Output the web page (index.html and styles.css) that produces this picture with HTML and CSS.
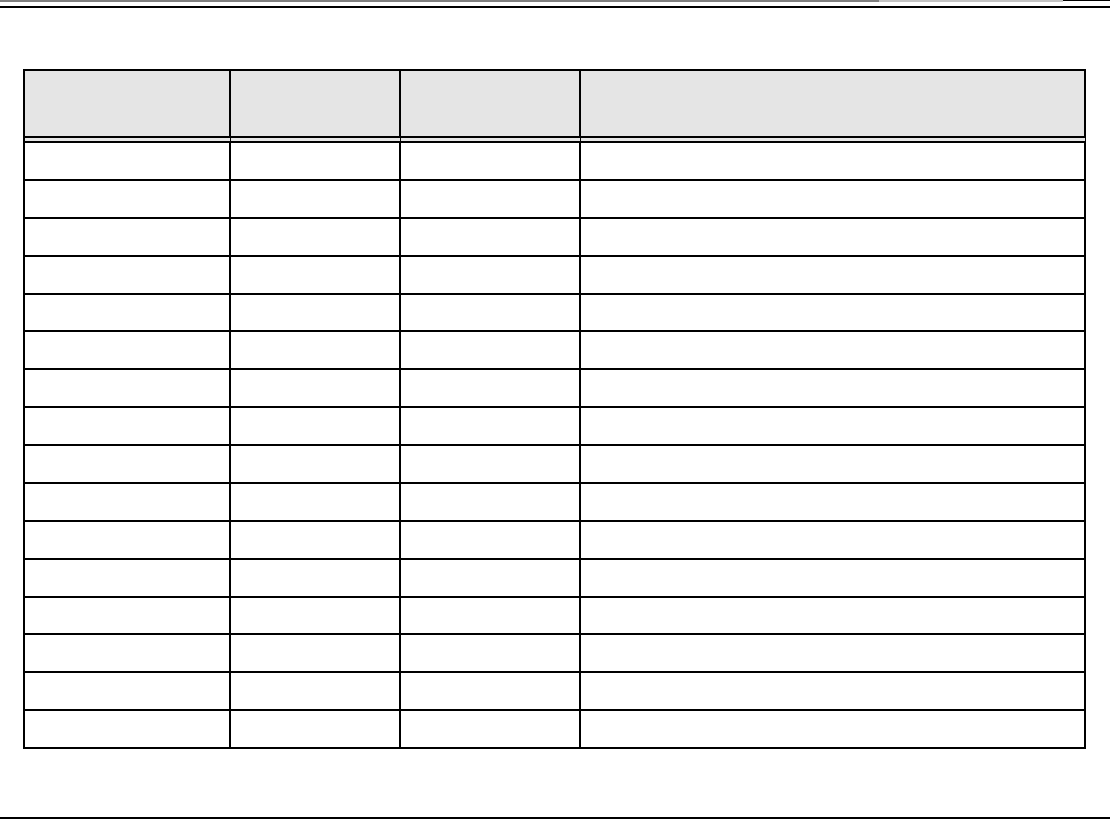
FILE: index.html
```html
<!DOCTYPE html>
<html lang="en">
<head>
<meta charset="utf-8">
<title>Table</title>
<link rel="stylesheet" href="styles.css">
</head>
<body>
<div class="page">
  <header class="top">
    <div class="strip">
      <span class="seg seg-dark"></span>
      <span class="seg seg-light"></span>
      <span class="seg seg-black"></span>
    </div>
    <div class="rule"></div>
  </header>
  <main class="content">
    <div class="table">
      <div class="cell head"></div>
      <div class="cell head"></div>
      <div class="cell head"></div>
      <div class="cell head"></div>

      <div class="cell"></div><div class="cell"></div><div class="cell"></div><div class="cell"></div>
      <div class="cell"></div><div class="cell"></div><div class="cell"></div><div class="cell"></div>
      <div class="cell"></div><div class="cell"></div><div class="cell"></div><div class="cell"></div>
      <div class="cell"></div><div class="cell"></div><div class="cell"></div><div class="cell"></div>
      <div class="cell"></div><div class="cell"></div><div class="cell"></div><div class="cell"></div>
      <div class="cell"></div><div class="cell"></div><div class="cell"></div><div class="cell"></div>
      <div class="cell"></div><div class="cell"></div><div class="cell"></div><div class="cell"></div>
      <div class="cell"></div><div class="cell"></div><div class="cell"></div><div class="cell"></div>
      <div class="cell"></div><div class="cell"></div><div class="cell"></div><div class="cell"></div>
      <div class="cell"></div><div class="cell"></div><div class="cell"></div><div class="cell"></div>
      <div class="cell"></div><div class="cell"></div><div class="cell"></div><div class="cell"></div>
      <div class="cell"></div><div class="cell"></div><div class="cell"></div><div class="cell"></div>
      <div class="cell"></div><div class="cell"></div><div class="cell"></div><div class="cell"></div>
      <div class="cell"></div><div class="cell"></div><div class="cell"></div><div class="cell"></div>
      <div class="cell"></div><div class="cell"></div><div class="cell"></div><div class="cell"></div>
      <div class="cell"></div><div class="cell"></div><div class="cell"></div><div class="cell"></div>
    </div>
  </main>
  <footer class="bottom">
    <div class="rule"></div>
  </footer>
</div>
</body>
</html>
```

FILE: styles.css
```css
* {
  box-sizing: border-box;
}

html, body {
  margin: 0;
  padding: 0;
  background: #ffffff;
  font-family: "Liberation Sans", Arial, sans-serif;
}

.page {
  width: 1110px;
  height: 819px;
  display: flex;
  flex-direction: column;
  overflow: hidden;
}

.top {
  display: flex;
  flex-direction: column;
}

.strip {
  display: flex;
  height: 2px;
}

.seg {
  display: block;
  height: 2px;
}

.seg-dark {
  width: 879px;
  background: #808080;
}

.seg-light {
  width: 184px;
  background: #c4c4c4;
}

.seg-black {
  flex: 1;
  height: 1px;
  background: #000000;
}

.rule {
  height: 2px;
  background: #000000;
}

.top .rule {
  margin-top: 4px;
}

.content {
  flex: 1;
  padding: 61px 0 0 23px;
}

.table {
  display: grid;
  grid-template-columns: 206px 170px 180px 505px;
  grid-template-rows: 72px;
  grid-auto-rows: 37.875px;
  width: max-content;
  border-left: 2px solid #000000;
  border-top: 2px solid #000000;
}

.cell {
  border-right: 2px solid #000000;
  border-bottom: 2px solid #000000;
  background: #ffffff;
}

.cell.head {
  background: #e5e5e5;
  border-bottom: 7px double #000000;
}

.bottom {
  padding-bottom: 0;
}
```
